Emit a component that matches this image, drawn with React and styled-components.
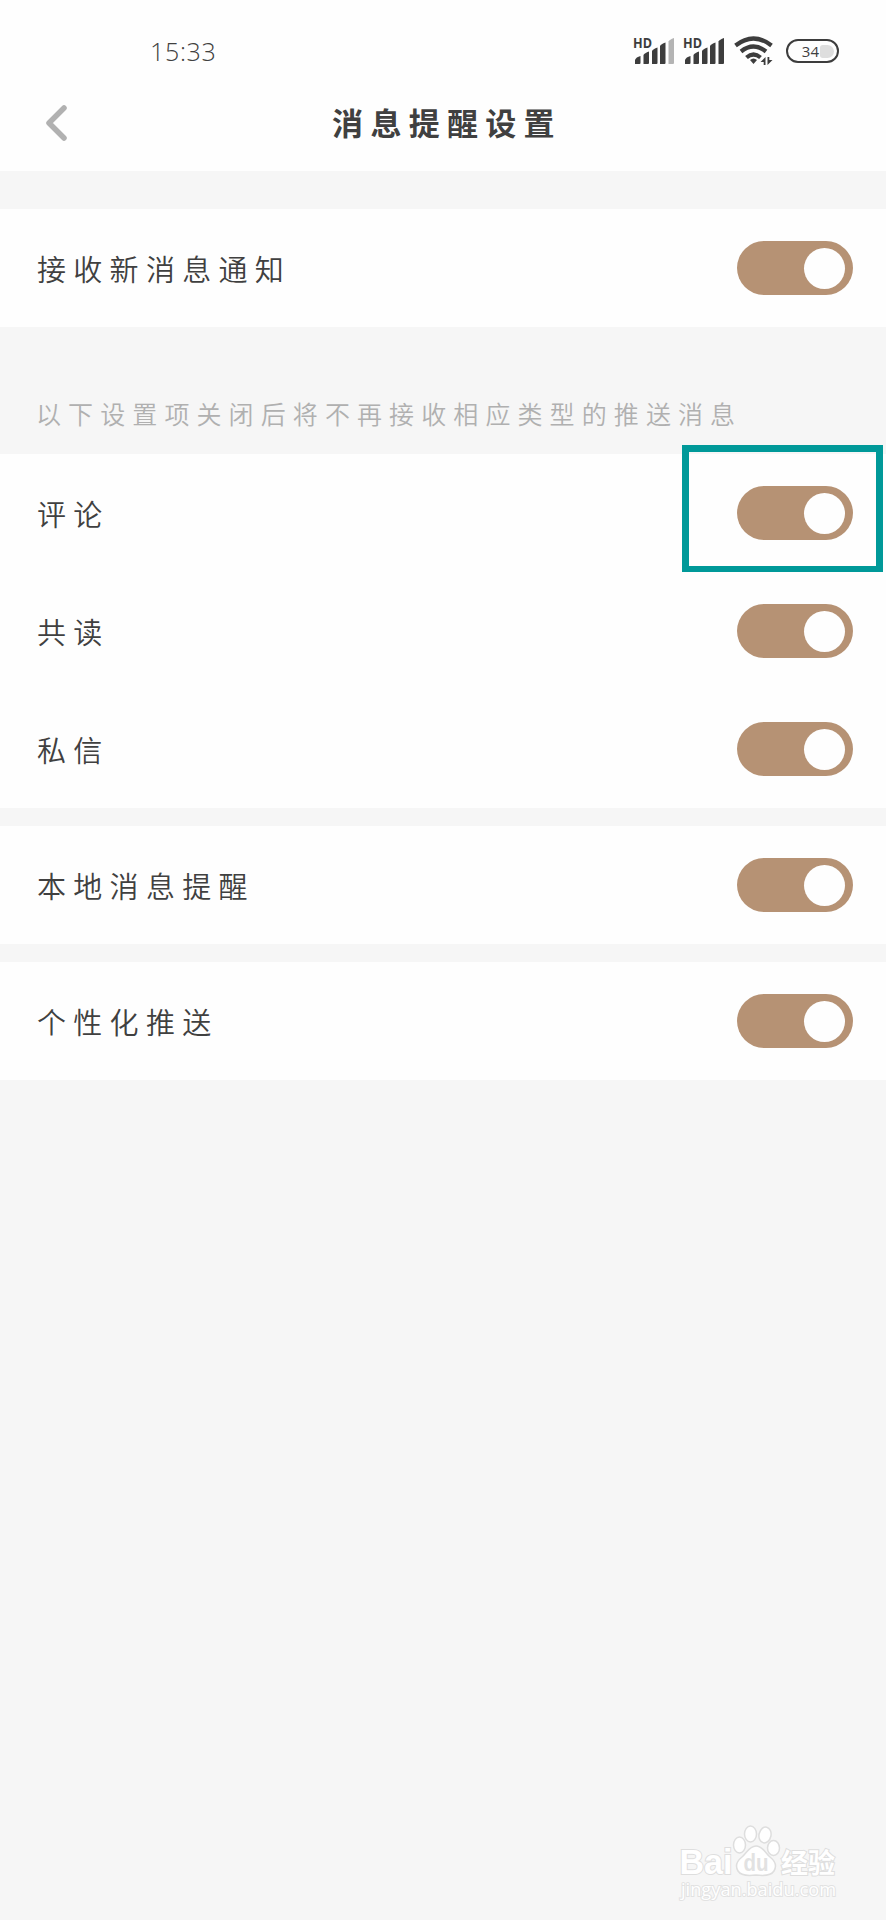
import React, { useState } from "react";
import styled, { createGlobalStyle } from "styled-components";

const sections = [
  { rows: ["接收新消息通知"] },
  {
    hint: "以下设置项关闭后将不再接收相应类型的推送消息",
    rows: ["评论", "共读", "私信"],
  },
  { rows: ["本地消息提醒"] },
  { rows: ["个性化推送"] },
];

const Signal = ({ weak }) => (
  <Glyph width="42" height="32" viewBox="0 -2 42 32">
    <HdText x="0" y="11" textLength="19" lengthAdjust="spacingAndGlyphs">HD</HdText>
    <g fill="#3d3d3d">
      <path d="M2 27v-4q1-3 5.500-4v7q0 1-1 1z" />
      <path d="M10.500 27V18q1-2 5.500-3.500V26q0 1-1 1z" />
      <path d="M19 27V14q1-2 5.500-3.500V26q0 1-1 1z" />
      <path d="M27 27V9q1-2 5.500-3.500V26q0 1-1 1z" />
      <path d="M35.500 27V4.500q1-2 5.500-3.500v25q0 1-1 1z" fill={weak ? "#b4b4b4" : "#3d3d3d"} />
    </g>
  </Glyph>
);

const Wifi = () => (
  <Glyph width="40" height="30" viewBox="0 0 40 30">
    <g fill="none" stroke="#3d3d3d" strokeWidth="4.200">
      <path d="M1.500 9.500Q19.500 -4.500 37.500 9.500" />
      <path d="M7 15.500Q19.500 5.500 32 15.500" />
      <path d="M12.500 21.500Q19.500 15.500 26.500 21.500" />
    </g>
    <path d="M16 24q3.500-3 7 0l-3.500 4z" fill="#3d3d3d" />
    <path d="M31.500 21v8h-1.800v-3h-3.200zM33.500 29v-8h1.800v3h3.200z" fill="#3d3d3d" />
  </Glyph>
);

const Switch = () => {
  const [on, setOn] = useState(true);

  return (
    <Track $on={on} role="switch" aria-checked={on} onClick={() => setOn(!on)}>
      <Knob />
    </Track>
  );
};

const App = () => {
  return (
    <Page>
      <GlobalStyle />
      <StatusBar>
        <Time>15:33</Time>
        <StatusIcons>
          <Signals>
            <Signal weak />
            <Signal />
          </Signals>
          <Wifi />
          <Battery>
            34<Charge />
          </Battery>
        </StatusIcons>
      </StatusBar>
      <Header>
        <Back aria-label="返回">
          <svg width="24" height="38" viewBox="0 0 24 38">
            <path
              d="M19 4L4 19l15 15"
              fill="none"
              stroke="#b1b1b1"
              strokeWidth="5.500"
              strokeLinecap="round"
              strokeLinejoin="round"
            />
          </svg>
        </Back>
        <Title>消息提醒设置</Title>
      </Header>
      <Sections>
        {sections.map((section) => (
          <section key={section.rows[0]}>
            {section.hint && <Hint>{section.hint}</Hint>}
            {section.rows.map((label) => (
              <Row key={label}>
                <Label>{label}</Label>
                <Switch />
                {label === "评论" && <Highlight />}
              </Row>
            ))}
          </section>
        ))}
      </Sections>
      <Watermark>
        <Glyph width="170" height="95" viewBox="0 0 170 95">
          <g fill="#fff" stroke="#dedede" strokeWidth="1.500">
            <ellipse cx="64.500" cy="30" rx="6" ry="8" />
            <ellipse cx="75.500" cy="19" rx="6" ry="8" />
            <ellipse cx="90" cy="20" rx="6" ry="8" transform="rotate(12 90 20)" />
            <ellipse cx="98.500" cy="33" rx="6" ry="7.500" />
            <path d="M81 31c7 0 9 7 14 11s7 9 4 14-10 5-18 4c-8 1-15 1-18-4s-1-10 4-14 7-11 14-11z" />
          </g>
          <Mark x="4.500" y="59" $size={35} textLength="53" lengthAdjust="spacingAndGlyphs">Bai</Mark>
          <Mark x="68.500" y="56" $size={23} $dark textLength="25" lengthAdjust="spacingAndGlyphs">du</Mark>
          <Mark x="106" y="57.500" $size={27} textLength="54" lengthAdjust="spacingAndGlyphs">经验</Mark>
          <SiteMark x="6" y="81" textLength="155" lengthAdjust="spacingAndGlyphs">jingyan.baidu.com</SiteMark>
        </Glyph>
      </Watermark>
    </Page>
  );
};

export default App;

const GlobalStyle = createGlobalStyle`
  body {
    margin: 0;
    background-color: #f6f6f6;
    font-family: "Noto Sans CJK SC", sans-serif;
  }
`;

const Page = styled.div`
  position: relative;
  width: 886px;
  height: 1920px;
  overflow: hidden;
  background-color: #f6f6f6;
  color: #404040;
`;

const Glyph = styled.svg`
  display: block;
  overflow: visible;
`;

const StatusBar = styled.div`
  display: flex;
  justify-content: space-between;
  align-items: center;
  height: 76px;
  padding: 26px 47px 0 150px;
  box-sizing: border-box;
  background-color: #fefefe;
`;

const Time = styled.div`
  font-family: "Open Sans", sans-serif;
  font-size: 25px;
  font-weight: 300;
  letter-spacing: 0.7px;
`;

const StatusIcons = styled.div`
  display: flex;
  align-items: center;
  gap: 8px;
`;

const Signals = styled.div`
  display: flex;
  gap: 8px;
  margin-right: 1px;
  padding-bottom: 1px;
`;

const HdText = styled.text`
  font-family: "Open Sans", sans-serif;
  font-size: 14px;
  font-weight: 700;
  fill: #3d3d3d;
`;

const Battery = styled.div`
  display: flex;
  justify-content: flex-end;
  align-items: center;
  width: 53px;
  height: 24px;
  margin-left: 4px;
  padding-right: 3px;
  box-sizing: border-box;
  border: 2.5px solid #3d3d3d;
  border-radius: 12px;
  font-family: "Open Sans", sans-serif;
  font-size: 15px;
  font-weight: 400;
`;

const Charge = styled.span`
  width: 14px;
  height: 13px;
  margin-left: 1px;
  border-radius: 3px 7px 7px 3px;
  background-color: #dedede;
`;

const Header = styled.header`
  display: grid;
  grid-template-columns: 90px 1fr 82px;
  align-items: center;
  height: 95px;
  padding-bottom: 1px;
  box-sizing: border-box;
  background-color: #fefefe;
`;

const Back = styled.button`
  display: flex;
  padding: 0 0 0 45px;
  border: none;
  background: none;
`;

const Title = styled.h1`
  margin: 0 0 2px;
  font-size: 31px;
  font-weight: 700;
  line-height: 40px;
  letter-spacing: 7.3px;
  text-align: center;
`;

const Sections = styled.main`
  display: flex;
  flex-direction: column;
  gap: 18px;
  padding-top: 38px;
`;

const Hint = styled.p`
  margin: 0;
  padding: 50px 36px 23px;
  color: #b0b0b0;
  font-size: 25px;
  font-weight: 350;
  line-height: 36px;
  letter-spacing: 7.1px;
`;

const Row = styled.div`
  position: relative;
  display: flex;
  justify-content: space-between;
  align-items: center;
  height: 118px;
  padding: 0 33px 0 37px;
  box-sizing: border-box;
  background-color: #fefefe;
`;

const Label = styled.span`
  margin-bottom: 1px;
  font-size: 29px;
  font-weight: 350;
  letter-spacing: 7.3px;
`;

const Track = styled.button`
  display: flex;
  justify-content: ${({ $on }) => ($on ? "flex-end" : "flex-start")};
  align-items: center;
  width: 116px;
  height: 54px;
  padding: 0 8px;
  border: none;
  border-radius: 27px;
  background-color: ${({ $on }) => ($on ? "#b69274" : "#dddddd")};
  cursor: pointer;
`;

const Knob = styled.span`
  width: 41px;
  height: 41px;
  border-radius: 50%;
  background-color: #fefefe;
`;

/* frame drawn over the first push switch */
const Highlight = styled.div`
  position: absolute;
  top: -9px;
  right: 3px;
  width: 201px;
  height: 128px;
  box-sizing: border-box;
  border: 7px solid #009999;
  pointer-events: none;
`;

const Watermark = styled.div`
  position: absolute;
  left: 675px;
  top: 1815px;
`;

const Mark = styled.text`
  font-family: "Liberation Sans", "Noto Sans CJK SC", sans-serif;
  font-size: ${({ $size }) => $size}px;
  font-weight: 700;
  fill: ${({ $dark }) => ($dark ? "#e2e2e2" : "#ffffff")};
  stroke: #dedede;
  stroke-width: ${({ $dark }) => ($dark ? 0 : 2)}px;
  paint-order: stroke;
`;

const SiteMark = styled.text`
  font-family: "Open Sans", sans-serif;
  font-size: 18px;
  fill: #ffffff;
  stroke: #e2e2e2;
  stroke-width: 2px;
  paint-order: stroke;
`;
